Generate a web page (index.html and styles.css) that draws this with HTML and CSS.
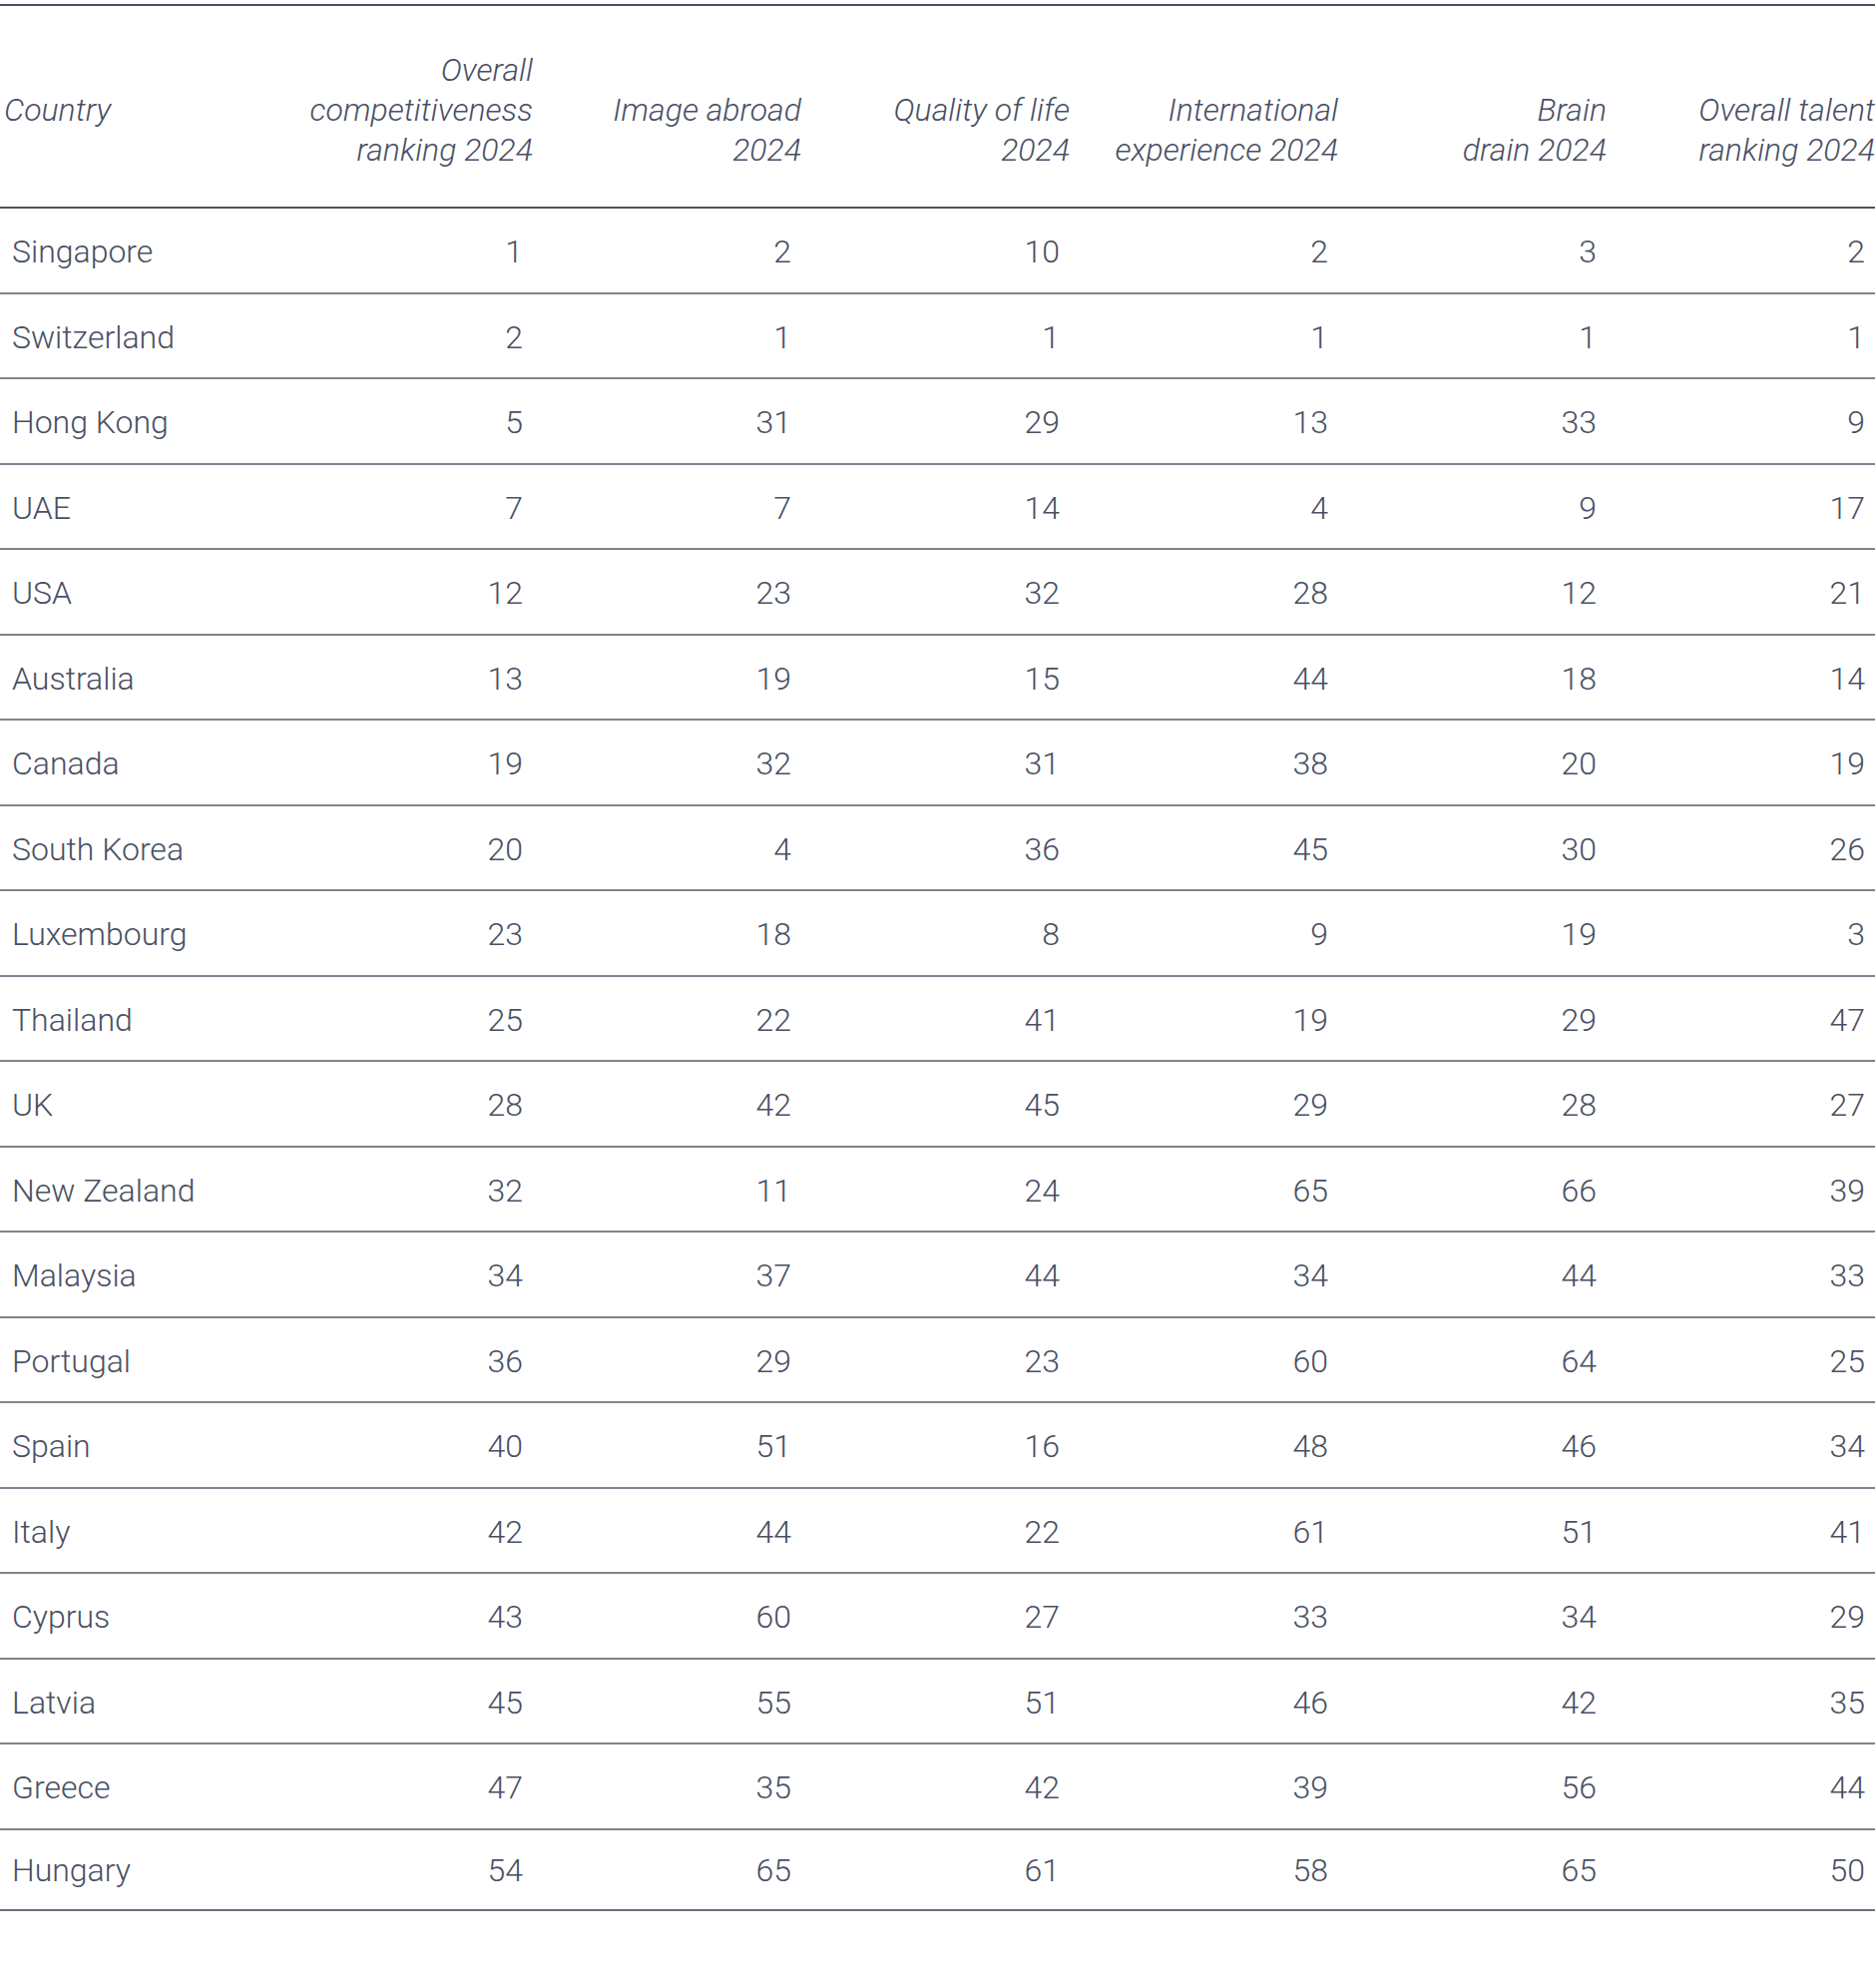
FILE: index.html
```html
<!DOCTYPE html>
<html lang="en">
<head>
<meta charset="utf-8">
<title>Talent rankings 2024</title>
<link rel="stylesheet" href="styles.css">
</head>
<body>
<table class="rank-table">
  <thead>
    <tr>
      <th class="h-country">Country</th>
      <th class="h-num">Overall<br>competitiveness<br>ranking 2024</th>
      <th class="h-num">Image abroad<br>2024</th>
      <th class="h-num">Quality of life<br>2024</th>
      <th class="h-num">International<br>experience 2024</th>
      <th class="h-num">Brain<br>drain 2024</th>
      <th class="h-num">Overall talent<br>ranking 2024</th>
    </tr>
  </thead>
  <tbody>
    <tr><td class="c-country">Singapore</td><td>1</td><td>2</td><td>10</td><td>2</td><td>3</td><td>2</td></tr>
    <tr><td class="c-country">Switzerland</td><td>2</td><td>1</td><td>1</td><td>1</td><td>1</td><td>1</td></tr>
    <tr><td class="c-country">Hong Kong</td><td>5</td><td>31</td><td>29</td><td>13</td><td>33</td><td>9</td></tr>
    <tr><td class="c-country">UAE</td><td>7</td><td>7</td><td>14</td><td>4</td><td>9</td><td>17</td></tr>
    <tr><td class="c-country">USA</td><td>12</td><td>23</td><td>32</td><td>28</td><td>12</td><td>21</td></tr>
    <tr><td class="c-country">Australia</td><td>13</td><td>19</td><td>15</td><td>44</td><td>18</td><td>14</td></tr>
    <tr><td class="c-country">Canada</td><td>19</td><td>32</td><td>31</td><td>38</td><td>20</td><td>19</td></tr>
    <tr><td class="c-country">South Korea</td><td>20</td><td>4</td><td>36</td><td>45</td><td>30</td><td>26</td></tr>
    <tr><td class="c-country">Luxembourg</td><td>23</td><td>18</td><td>8</td><td>9</td><td>19</td><td>3</td></tr>
    <tr><td class="c-country">Thailand</td><td>25</td><td>22</td><td>41</td><td>19</td><td>29</td><td>47</td></tr>
    <tr><td class="c-country">UK</td><td>28</td><td>42</td><td>45</td><td>29</td><td>28</td><td>27</td></tr>
    <tr><td class="c-country">New Zealand</td><td>32</td><td>11</td><td>24</td><td>65</td><td>66</td><td>39</td></tr>
    <tr><td class="c-country">Malaysia</td><td>34</td><td>37</td><td>44</td><td>34</td><td>44</td><td>33</td></tr>
    <tr><td class="c-country">Portugal</td><td>36</td><td>29</td><td>23</td><td>60</td><td>64</td><td>25</td></tr>
    <tr><td class="c-country">Spain</td><td>40</td><td>51</td><td>16</td><td>48</td><td>46</td><td>34</td></tr>
    <tr><td class="c-country">Italy</td><td>42</td><td>44</td><td>22</td><td>61</td><td>51</td><td>41</td></tr>
    <tr><td class="c-country">Cyprus</td><td>43</td><td>60</td><td>27</td><td>33</td><td>34</td><td>29</td></tr>
    <tr><td class="c-country">Latvia</td><td>45</td><td>55</td><td>51</td><td>46</td><td>42</td><td>35</td></tr>
    <tr><td class="c-country">Greece</td><td>47</td><td>35</td><td>42</td><td>39</td><td>56</td><td>44</td></tr>
    <tr class="last-row"><td class="c-country">Hungary</td><td>54</td><td>65</td><td>61</td><td>58</td><td>65</td><td>50</td></tr>
  </tbody>
</table>
</body>
</html>
```
FILE: styles.css
```css
html, body {
  margin: 0;
  padding: 0;
  background: #ffffff;
}

body {
  padding-top: 4px;
  font-family: Roboto, "Liberation Sans", sans-serif;
  font-weight: 300;
  color: #495064;
}

.rank-table {
  width: 1879px;
  border-collapse: collapse;
  table-layout: fixed;
}

.rank-table th {
  box-sizing: border-box;
  font-style: italic;
  font-weight: 300;
  font-size: 32px;
  line-height: 40px;
  text-align: right;
  border-top: 2px solid #4a5164;
  border-bottom: 2px solid #4a5164;
  padding: 44px 0 37px 0;
  vertical-align: bottom;
  white-space: nowrap;
}

.rank-table th.h-num {
  width: 269px;
}

.rank-table th.h-country {
  width: 265px;
  text-align: left;
  vertical-align: middle;
  padding: 45px 0 39px 4px;
}

.rank-table td {
  font-size: 32px;
  line-height: 36px;
  text-align: right;
  padding: 25px 10px 22.5px 0;
  border-bottom: 2px solid #80838f;
}

.rank-table td.c-country {
  text-align: left;
  padding-left: 12px;
}

.rank-table tr.last-row td {
  padding-top: 22px;
  padding-bottom: 21px;
  border-bottom-color: #6a6f7d;
}
```
